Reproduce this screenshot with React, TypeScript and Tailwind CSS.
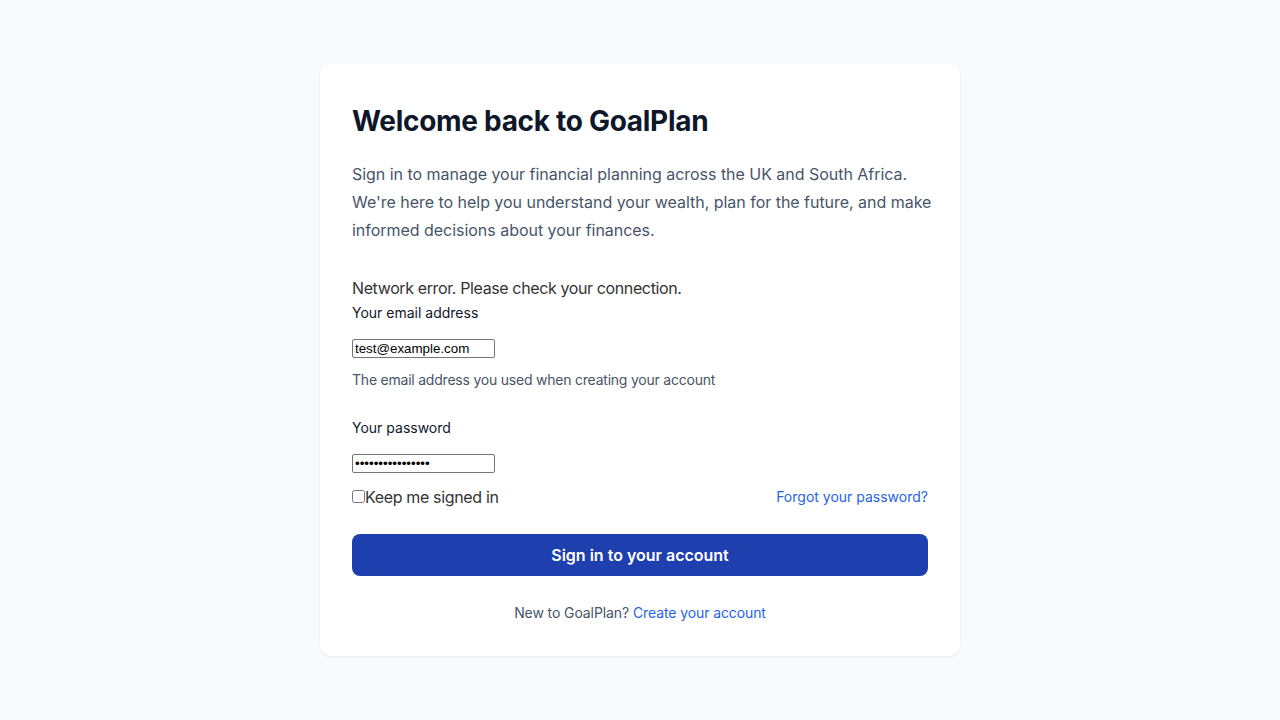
import { useState } from "react";

const App = () => {
  const [email, setEmail] = useState("test@example.com");
  const [password, setPassword] = useState("password12345678");
  const [remember, setRemember] = useState(false);

  return (
    <div className="min-h-screen bg-[#f9fafb] font-['Inter',sans-serif] pt-16">
      <div className="mx-auto w-[640px] bg-white rounded-xl shadow-[0_1px_3px_rgba(0,0,0,0.06)] px-8 pt-10 pb-[33px]">
        {/* Header */}
        <h1 className="text-[28px] leading-[34px] font-bold text-[#0f172a] tracking-[-0.3px]">
          Welcome back to GoalPlan
        </h1>
        <p className="mt-[22px] -mr-3 text-base leading-7 text-[#475569] tracking-[-0.03px]">
          Sign in to manage your financial planning across the UK and South Africa. We're here to help you
          understand your wealth, plan for the future, and make informed decisions about your finances.
        </p>

        <form onSubmit={(e) => e.preventDefault()}>
          <div className="mt-8 text-base leading-6 text-[#333333] tracking-[-0.38px]">
            Network error. Please check your connection.
          </div>

          {/* Email */}
          <label className="block mt-[3px] text-sm leading-5 text-[#0f172a]">Your email address</label>
          <input
            type="email"
            value={email}
            onChange={(e) => setEmail(e.target.value)}
            className="block mt-4 w-[143px] h-[19px] px-[2px] border border-[#767676] rounded-[2px] bg-white text-[13.33px] leading-[15px] text-black font-['Liberation_Sans',Arial,sans-serif]"
          />
          <p className="mt-3 text-sm leading-5 text-[#475569] tracking-[-0.22px]">
            The email address you used when creating your account
          </p>

          {/* Password */}
          <label className="block mt-7 text-sm leading-5 text-[#0f172a]">Your password</label>
          <input
            type="password"
            value={password}
            onChange={(e) => setPassword(e.target.value)}
            className="block mt-4 w-[143px] h-[19px] px-[2px] border border-[#767676] rounded-[2px] bg-white text-[13.33px] leading-[15px] text-black font-['Liberation_Sans',Arial,sans-serif]"
          />

          <div className="mt-3 flex items-center justify-between">
            <label className="flex items-center text-base leading-6 text-[#333333] tracking-[-0.35px]">
              <input
                type="checkbox"
                checked={remember}
                onChange={(e) => setRemember(e.target.checked)}
                className="w-[13px] h-[13px] -mt-[2px]"
              />
              Keep me signed in
            </label>
            <a href="#" className="text-sm leading-5 text-[#2563eb]">
              Forgot your password?
            </a>
          </div>

          <button
            type="submit"
            className="mt-[25px] w-full h-[42px] rounded-lg bg-[#1e40af] text-white text-base font-semibold"
          >
            Sign in to your account
          </button>
        </form>

        <p className="mt-[27px] text-center text-sm leading-5 text-[#475569] tracking-[-0.1px]">
          New to GoalPlan?{" "}
          <a href="#" className="text-[#2563eb]">
            Create your account
          </a>
        </p>
      </div>
    </div>
  );
};

export default App;
